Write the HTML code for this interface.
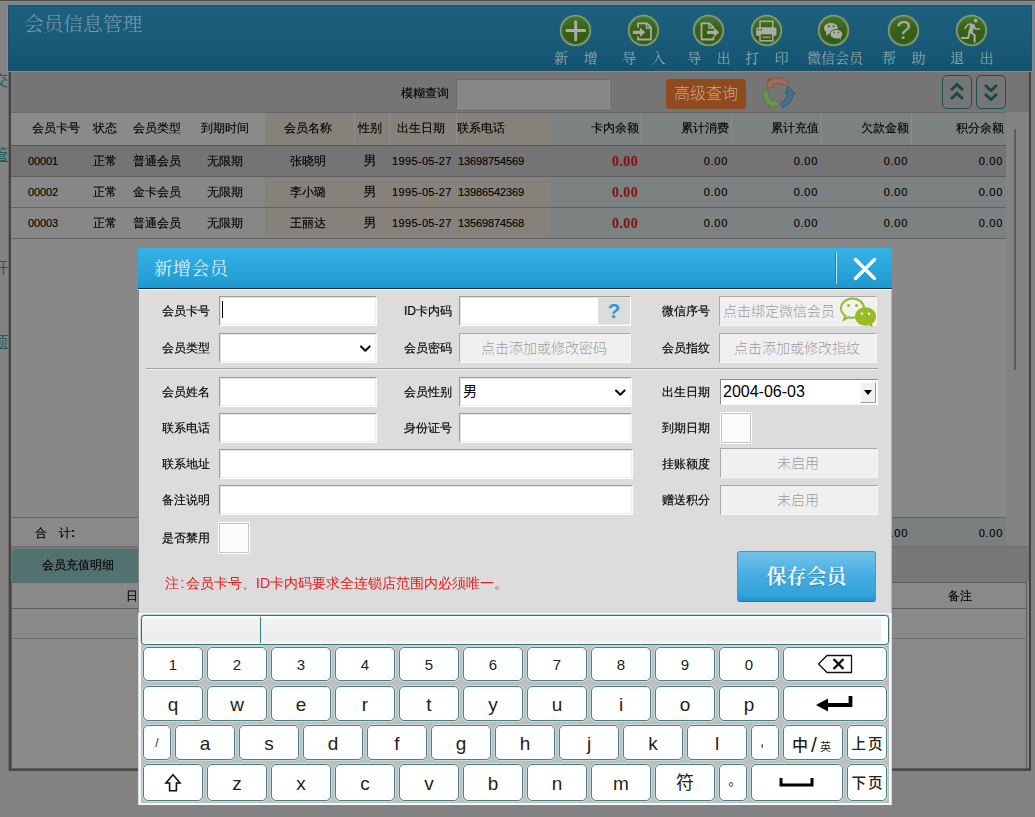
<!DOCTYPE html>
<html lang="zh-CN">
<head>
<meta charset="utf-8">
<title>会员信息管理</title>
<style>
html,body{margin:0;padding:0}
body{width:1035px;height:817px;position:relative;overflow:hidden;background:#838383;
 font-family:"Liberation Sans","Noto Sans CJK SC",sans-serif;font-size:12px;color:#000;line-height:1}
div,span{box-sizing:border-box}
.a{position:absolute}
.song{font-family:"Liberation Serif","Noto Serif CJK SC",serif}
.t{position:absolute;white-space:nowrap;-webkit-text-stroke:.12px #000;font-family:"Liberation Sans","WenQuanYi Zen Hei",sans-serif;font-size:12px;line-height:14px;height:14px}
/* ---------- background app ---------- */
#hdr{z-index:1;left:7px;top:4px;width:1026px;height:68px;background:linear-gradient(#1d607d,#195b78 50%,#125470);border:1px solid #798f99;box-shadow:inset 0 0 0 1px #1f4f66}
#title{z-index:2;left:24px;top:12px;font-size:19.700px;line-height:24px;color:#7d9dab;font-weight:300;white-space:nowrap}
.ico{z-index:2;position:absolute;top:15px;width:31px;height:31px;border-radius:50%;background:linear-gradient(#4a7630,#38641a 40%,#305813);box-shadow:inset 0 0 0 1.300px #8a9c82,inset 0 0 1.500px 2px #5d8045,0 0 1.500px #5d8a6a}
.ico svg{position:absolute;left:0;top:0}
.ilab{z-index:2;position:absolute;top:50px;font-size:14px;line-height:17px;color:#93a8b0;white-space:nowrap;font-weight:400}
#tbar{left:11px;top:71px;width:1018px;height:41px;background:#757575}
.hcell{position:absolute;top:112px;height:33px}
.row{position:absolute;left:11px;width:995px;height:31px}
.line{position:absolute;height:1px;background:#626262}
.t.r{text-align:right}
.num{font-family:"Liberation Sans",sans-serif;font-size:11px;letter-spacing:-0.12px}
.red{font-family:"Liberation Serif",serif;font-weight:bold;font-size:14px;color:#870f0f;-webkit-text-stroke:0;letter-spacing:.35px;margin-right:-1px}
.amt{letter-spacing:.7px}
/* ---------- modal ---------- */
#modal{left:138px;top:248px;width:754px;height:557px;background:#dcdcdc}
#mh{left:0;top:0;width:754px;height:41px;background:linear-gradient(#34b2e4,#2aa6dc 50%,#1e99d0);border-bottom:1px solid #082f4e;box-shadow:0 1px 0 #f4fcff}
.lab{position:absolute;-webkit-text-stroke:.15px #000;font-family:"Liberation Sans","WenQuanYi Zen Hei",sans-serif;font-size:12px;line-height:14px;height:14px;white-space:nowrap;color:#000}
.inp{position:absolute;background:#fff;border:1px solid;border-color:#9c9c9c #fcfcfc #fcfcfc #9c9c9c;box-shadow:inset 1px 1px 0 #e4e4e4,inset -1px -1px 0 #eee}
.dis{position:absolute;background:#f0f0f0;border:1px solid;border-color:#a8a8a8 #f8f8f8 #f8f8f8 #a8a8a8;color:#9d9d9d;font-size:14px;text-align:center;line-height:29px;font-weight:300;text-indent:-2px;white-space:nowrap}
.chk{position:absolute;width:32px;height:32px;background:#fdfbfd;border:1px solid #fff;box-shadow:inset 0 0 0 1px #c4c4c4}
/* keyboard */
#kb{left:1px;top:365px;width:752px;height:192px;background:#bebebe;border:2px solid #f7f7f7}
.k{position:absolute;height:34px;background:#fff;border:1px solid #4a8080;border-radius:5px;text-align:center;font-size:19px;line-height:36px;color:#222;box-shadow:0 0 0 1px #c6dcdc}
.k.n{font-size:15px;line-height:34px}
</style>
</head>
<body>
<!-- BG-START -->
<div class="a" style="left:0;top:0;width:1035px;height:2px;background:#8a8a8a;border-top:1px solid #4b4b4b"></div>
<!-- left sidebar slivers -->
<div class="a" style="left:-7px;top:72px;font-size:15px;line-height:18px;color:#245a5a">交</div>
<div class="a" style="left:-7px;top:146px;font-size:15px;line-height:18px;color:#245a5a;text-decoration:underline">管</div>
<div class="a" style="left:-7px;top:259px;font-size:15px;line-height:18px;color:#245a5a">开</div>
<div class="a" style="left:-7px;top:333px;font-size:15px;line-height:18px;color:#245a5a;text-decoration:underline">项</div>
<!-- window frame -->
<div class="a" style="left:8px;top:71px;width:1023px;height:700px;background:#888;border-left:3px solid #454545;border-right:2px solid #404040;border-bottom:3px solid #4a4a4a"></div>
<div class="a" style="left:8px;top:71px;width:1px;height:700px;background:#6a6a6a"></div>
<div class="a" id="hdr"></div>
<div class="a song" id="title">会员信息管理</div>
<!-- toolbar icons -->
<div class="ico" style="left:560px"><svg width="31" height="31" viewBox="0 0 31 31"><path d="M15.700 6.700v18M6.700 15.600h18" stroke="#a9ada5" stroke-width="3" stroke-linecap="round" fill="none"/></svg></div>
<div class="ilab song" style="left:554px"><span style="letter-spacing:15.5px">新</span>增</div>
<div class="ico" style="left:628px"><svg width="31" height="31" viewBox="0 0 31 31"><path d="M10 12.500V8.300h9l4 4v12.200H10v-3" stroke="#a9ada5" stroke-width="1.800" fill="none" stroke-linejoin="round"/><path d="M18.500 8.500v4.500h4.500" stroke="#a9ada5" stroke-width="1.400" fill="none"/><path d="M4.800 15.700h7.200v-3l5.200 4.600-5.200 4.600v-3H4.800z" fill="#a9ada5"/></svg></div>
<div class="ilab song" style="left:622px"><span style="letter-spacing:15.5px">导</span>入</div>
<div class="ico" style="left:692.5px"><svg width="31" height="31" viewBox="0 0 31 31"><path d="M20.500 21.500v3h-12V8.300h8l4 4v1.500" stroke="#a9ada5" stroke-width="1.800" fill="none" stroke-linejoin="round"/><path d="M16 8.500v4.500h4.500" stroke="#a9ada5" stroke-width="1.400" fill="none"/><path d="M14 15.700h7v-3l5.200 4.600-5.200 4.600v-3h-7z" fill="#a9ada5"/></svg></div>
<div class="ilab song" style="left:687px"><span style="letter-spacing:15.5px">导</span>出</div>
<div class="ico" style="left:751px"><svg width="31" height="31" viewBox="0 0 31 31"><rect x="9" y="6.300" width="12.800" height="7" fill="none" stroke="#a9ada5" stroke-width="1.500"/><rect x="5.200" y="12.500" width="20.300" height="8.300" rx="1" fill="#a9ada5"/><rect x="9" y="18.600" width="12.800" height="7.200" fill="#36601a" stroke="#a9ada5" stroke-width="1.500"/><path d="M11.500 22.200h8" stroke="#a9ada5" stroke-width="1.200"/><rect x="6.700" y="14" width="1.500" height="1.500" fill="#36601a"/><rect x="9.500" y="14" width="1.500" height="1.500" fill="#36601a"/></svg></div>
<div class="ilab song" style="left:745px"><span style="letter-spacing:15.5px">打</span>印</div>
<div class="ico" style="left:818px"><svg width="31" height="31" viewBox="0 0 31 31"><ellipse cx="12.900" cy="13.100" rx="7" ry="5.400" fill="#a9ada5"/><path d="M8.500 16.500l-.7 4.200 4.500-2.700z" fill="#a9ada5"/><ellipse cx="18.400" cy="19.200" rx="6.300" ry="4.800" fill="#a9ada5" stroke="#36601a" stroke-width=".9"/><path d="M20.500 23l2.600 1.600-.6-3z" fill="#a9ada5"/><circle cx="10.800" cy="11.200" r=".95" fill="#36601a"/><circle cx="15.600" cy="11.200" r=".95" fill="#36601a"/><circle cx="16.200" cy="17.500" r=".8" fill="#36601a"/><circle cx="20.500" cy="17.500" r=".8" fill="#36601a"/></svg></div>
<div class="ilab song" style="left:807px">微信会员</div>
<div class="ico" style="left:888px"><div class="a" style="left:0;top:2px;width:31px;text-align:center;font-size:26px;line-height:27px;color:#a9ada5;font-family:'Liberation Sans',sans-serif">?</div></div>
<div class="ilab song" style="left:882px"><span style="letter-spacing:15.5px">帮</span>助</div>
<div class="ico" style="left:956px"><svg width="31" height="31" viewBox="0 0 31 31"><circle cx="19.700" cy="5.600" r="1.900" fill="#a9ada5"/><path d="M16.700 9l-2.500 9" stroke="#a9ada5" stroke-width="4.200" fill="none"/><path d="M15 8.700l-3.200 1-3.300 4" stroke="#a9ada5" stroke-width="1.600" fill="none" stroke-linejoin="round"/><path d="M17.500 10.500l2 3.500h4.800" stroke="#a9ada5" stroke-width="1.600" fill="none" stroke-linejoin="round"/><path d="M13.600 17l-1.400 5.900H5.300" stroke="#a9ada5" stroke-width="2" fill="none" stroke-linejoin="miter"/><path d="M14.800 17.300l3.800 3v7.200" stroke="#a9ada5" stroke-width="2" fill="none" stroke-linejoin="miter"/></svg></div>
<div class="ilab song" style="left:950px"><span style="letter-spacing:15.5px">退</span>出</div>
<!-- toolbar band -->
<div class="a" id="tbar"></div>
<div class="t" style="left:401px;top:86px">模糊查询</div>
<div class="a" style="left:456px;top:79px;width:154px;height:30px;background:#868686;border:1px solid;border-color:#6a6a6a #919191 #919191 #6a6a6a"></div>
<div class="a" style="left:666px;top:79px;width:80px;height:30px;background:#8f4a1e;border-radius:3px;color:#c9a48e;font-size:16px;line-height:29px;text-align:center;font-weight:300">高级查询</div>
<svg class="a" style="left:758px;top:72.5px" width="40" height="40" viewBox="0 0 40 40">
 <path d="M30.75 9.25A15.2 15.2 0 0 0 11.50 7.40L10.94 4.91L8.72 15.90L16.19 13.66L14.52 11.88A9.8 9.8 0 0 1 26.43 12.60Z" fill="#a06d57" stroke="#80503c" stroke-width=".8" stroke-linejoin="round"/>
 <path d="M5.19 16.58A15.2 15.2 0 0 0 12.86 33.42L10.94 35.09L21.67 31.88L16.19 26.34L15.40 28.65A9.8 9.8 0 0 1 10.32 18.47Z" fill="#6a9451" stroke="#52743f" stroke-width=".8" stroke-linejoin="round"/>
 <path d="M24.19 34.61A15.2 15.2 0 0 0 35.20 20.27L37.56 21.23L29.83 13.12L27.38 20.52L29.80 20.17A9.8 9.8 0 0 1 23.35 29.21Z" fill="#407198" stroke="#2d5472" stroke-width=".8" stroke-linejoin="round"/>
</svg>
<div class="a" style="left:942px;top:75px;width:30px;height:34px;border:1px solid #1b4e4e;border-radius:5px"><svg width="28" height="32" viewBox="0 0 28 32"><path d="M8 14l6-5.500 6 5.500M8 23l6-5.500 6 5.500" stroke="#154846" stroke-width="2.800" fill="none"/></svg></div>
<div class="a" style="left:976px;top:75px;width:30px;height:34px;border:1px solid #1b4e4e;border-radius:5px"><svg width="28" height="32" viewBox="0 0 28 32"><path d="M8 9l6 5.500 6-5.500M8 18l6 5.500 6-5.500" stroke="#154846" stroke-width="2.800" fill="none"/></svg></div>
<!-- table header -->
<div class="a" style="left:11px;top:112px;width:995px;height:34px;background:#8a8a8a;border-top:1px solid #686868"></div>
<div class="a" style="left:265px;top:113px;width:285px;height:125px;background:#86817a"></div>
<div class="a" style="left:550px;top:113px;width:456px;height:125px;background:#7c8281"></div>
<div class="a" style="left:550px;top:113px;width:2px;height:32px;background:#86817a"></div>
<div class="a" style="left:11px;top:177px;width:254px;height:61px;background:#878787"></div>
<div class="a" style="left:11px;top:145px;width:995px;height:32px;background:#747474;border-top:1px solid #555"></div>
<div class="line" style="left:11px;top:176px;width:995px;background:#606060"></div>
<div class="line" style="left:11px;top:207px;width:995px;background:#626262"></div>
<div class="line" style="left:11px;top:238px;width:995px;background:#626262"></div>
<!-- header dividers -->
<div class="a" style="left:354px;top:113px;width:1px;height:32px;background:#938c86"></div>
<div class="a" style="left:389px;top:113px;width:1px;height:32px;background:#938c86"></div>
<div class="a" style="left:456px;top:113px;width:1px;height:32px;background:#938c86"></div>
<div class="a" style="left:641px;top:113px;width:1px;height:32px;background:#869092"></div>
<div class="a" style="left:731px;top:113px;width:1px;height:32px;background:#869092"></div>
<div class="a" style="left:821px;top:113px;width:1px;height:32px;background:#869092"></div>
<div class="a" style="left:911px;top:113px;width:1px;height:32px;background:#869092"></div>
<!-- header text -->
<div class="t" style="left:32px;top:121px">会员卡号</div>
<div class="t" style="left:93px;top:121px">状态</div>
<div class="t" style="left:133px;top:121px">会员类型</div>
<div class="t" style="left:201px;top:121px">到期时间</div>
<div class="t" style="left:284px;top:121px">会员名称</div>
<div class="t" style="left:358px;top:121px">性别</div>
<div class="t" style="left:397px;top:121px">出生日期</div>
<div class="t" style="left:457px;top:121px">联系电话</div>
<div class="t r" style="right:396px;top:121px">卡内余额</div>
<div class="t r" style="right:306px;top:121px">累计消费</div>
<div class="t r" style="right:216px;top:121px">累计充值</div>
<div class="t r" style="right:126px;top:121px">欠款金额</div>
<div class="t r" style="right:31px;top:121px">积分余额</div>
<div class="t num" style="left:28px;top:154px">00001</div>
<div class="t" style="left:93px;top:154px">正常</div>
<div class="t" style="left:133px;top:154px">普通会员</div>
<div class="t" style="left:207px;top:154px">无限期</div>
<div class="t" style="left:290px;top:154px">张晓明</div>
<div class="t" style="left:363.5px;top:154px;font-size:13px">男</div>
<div class="t num" style="left:392px;top:154px;letter-spacing:.35px">1995-05-27</div>
<div class="t num" style="left:458px;top:154px">13698754569</div>
<div class="t red" style="right:398px;top:154.5px">0.00</div>
<div class="t num amt" style="right:307px;top:154px">0.00</div>
<div class="t num amt" style="right:217px;top:154px">0.00</div>
<div class="t num amt" style="right:127px;top:154px">0.00</div>
<div class="t num amt" style="right:32px;top:154px">0.00</div>
<div class="t num" style="left:28px;top:185px">00002</div>
<div class="t" style="left:93px;top:185px">正常</div>
<div class="t" style="left:133px;top:185px">金卡会员</div>
<div class="t" style="left:207px;top:185px">无限期</div>
<div class="t" style="left:290px;top:185px">李小璐</div>
<div class="t" style="left:363.5px;top:185px;font-size:13px">男</div>
<div class="t num" style="left:392px;top:185px;letter-spacing:.35px">1995-05-27</div>
<div class="t num" style="left:458px;top:185px">13986542369</div>
<div class="t red" style="right:398px;top:185.5px">0.00</div>
<div class="t num amt" style="right:307px;top:185px">0.00</div>
<div class="t num amt" style="right:217px;top:185px">0.00</div>
<div class="t num amt" style="right:127px;top:185px">0.00</div>
<div class="t num amt" style="right:32px;top:185px">0.00</div>
<div class="t num" style="left:28px;top:216px">00003</div>
<div class="t" style="left:93px;top:216px">正常</div>
<div class="t" style="left:133px;top:216px">普通会员</div>
<div class="t" style="left:207px;top:216px">无限期</div>
<div class="t" style="left:290px;top:216px">王丽达</div>
<div class="t" style="left:363.5px;top:216px;font-size:13px">男</div>
<div class="t num" style="left:392px;top:216px;letter-spacing:.35px">1995-05-27</div>
<div class="t num" style="left:458px;top:216px">13569874568</div>
<div class="t red" style="right:398px;top:216.5px">0.00</div>
<div class="t num amt" style="right:307px;top:216px">0.00</div>
<div class="t num amt" style="right:217px;top:216px">0.00</div>
<div class="t num amt" style="right:127px;top:216px">0.00</div>
<div class="t num amt" style="right:32px;top:216px">0.00</div>
<!-- scrollbar line -->
<div class="a" style="left:1006px;top:112px;width:23px;height:435px;background:#838383"></div>
<div class="a" style="left:1014px;top:129px;width:2px;height:241px;background:#5c5c5c"></div>
<!-- total row -->
<div class="a" style="left:11px;top:517px;width:995px;height:30px;background:#8a8a8a;border-top:1px solid #646464;border-bottom:1px solid #707070"></div>
<div class="a" style="left:550px;top:518px;width:456px;height:28px;background:#7a807f"></div>
<div class="t" style="left:35px;top:526px"><span style="letter-spacing:12px">合</span>计<b>:</b></div>
<div class="t num amt" style="right:127px;top:526px">0.00</div>
<div class="t num amt" style="right:32px;top:526px">0.00</div>
<div class="line" style="left:11px;top:546px;width:1018px;background:#6c6c6c"></div>
<!-- tab strip -->
<div class="a" style="left:11px;top:547px;width:1018px;height:35px;background:#777"></div>
<div class="a" style="left:12px;top:549px;width:140px;height:34px;background:#53716f;border-radius:4px 0 0 0;z-index:2"></div>
<div class="t" style="left:42px;top:558px;z-index:3">会员充值明细</div>
<!-- detail grid -->
<div class="a" style="left:11px;top:582px;width:1016px;height:187px;background:#898989;border:1px solid #5c5c5c"></div>
<div class="line" style="left:11px;top:608px;width:1016px;background:#5c5c5c"></div>
<div class="line" style="left:11px;top:638px;width:1016px;background:#6c6c6c"></div>
<div class="t" style="left:126px;top:589px">日期</div>
<div class="t" style="left:948px;top:589px">备注</div>
<!-- BG-END -->
<!-- MODAL-START -->
<div class="a" id="modal" style="z-index:5">
 <div class="a" style="left:0;top:41px;width:754px;height:324px;border-left:1px solid #858585;border-right:1px solid #b4b4b4"></div>
 <div class="a" id="mh"></div>
 <div class="a song" style="left:16px;top:8px;font-size:18.5px;line-height:22px;margin-top:1.5px;color:#d9f1fb;white-space:nowrap">新增会员</div>
 <div class="a" style="left:697px;top:4px;width:2px;height:32px;background:#1a86b8;border-right:1px solid #bfe6f6"></div>
 <svg class="a" style="left:714px;top:8px" width="26" height="26" viewBox="0 0 26 26"><path d="M3.500 3.500l19 19M22.500 3.500l-19 19" stroke="#fff" stroke-width="3.400" stroke-linecap="round"/></svg>
 <div class="lab" style="left:24px;top:56px">会员卡号</div>
 <div class="lab" style="left:24px;top:93px">会员类型</div>
 <div class="lab" style="left:24px;top:137px">会员姓名</div>
 <div class="lab" style="left:24px;top:173px">联系电话</div>
 <div class="lab" style="left:24px;top:209px">联系地址</div>
 <div class="lab" style="left:24px;top:245px">备注说明</div>
 <div class="lab" style="left:24px;top:283px">是否禁用</div>
 <div class="lab" style="left:266px;top:56px">ID卡内码</div>
 <div class="lab" style="left:266px;top:93px">会员密码</div>
 <div class="lab" style="left:266px;top:137px">会员性别</div>
 <div class="lab" style="left:266px;top:173px">身份证号</div>
 <div class="lab" style="left:524px;top:56px">微信序号</div>
 <div class="lab" style="left:524px;top:93px">会员指纹</div>
 <div class="lab" style="left:524px;top:137px">出生日期</div>
 <div class="lab" style="left:524px;top:173px">到期日期</div>
 <div class="lab" style="left:524px;top:209px">挂账额度</div>
 <div class="lab" style="left:524px;top:245px">赠送积分</div>
 <div class="inp" style="left:81px;top:48px;width:158px;height:30px"></div>
 <div class="inp" style="left:81px;top:85px;width:158px;height:30px"></div>
 <div class="inp" style="left:81px;top:129px;width:158px;height:30px"></div>
 <div class="inp" style="left:81px;top:165px;width:158px;height:30px"></div>
 <div class="inp" style="left:81px;top:201px;width:414px;height:30px"></div>
 <div class="inp" style="left:81px;top:237px;width:414px;height:30px"></div>
 <div class="a" style="left:84px;top:53px;width:1px;height:17px;background:#000"></div>
 <svg class="a" style="left:220px;top:95px" width="14" height="10" viewBox="0 0 14 10"><path d="M3 3.400l4.300 4.300 4.300-4.300" stroke="#111" stroke-width="2.100" fill="none" stroke-linecap="round" stroke-linejoin="round"/></svg>
 <div class="inp" style="left:321px;top:48px;width:172px;height:30px"></div>
 <div class="a" style="left:460px;top:50px;width:32px;height:26px;background:#dcdcdc;color:#2f9bd1;font-weight:bold;font-size:21px;line-height:26px;text-align:center">?</div>
 <div class="dis" style="left:321px;top:85px;width:172px;height:30px">点击添加或修改密码</div>
 <div class="inp" style="left:321px;top:129px;width:173px;height:30px"><span style="position:absolute;left:3px;top:4px;font-size:14px;line-height:18px">男</span></div>
 <svg class="a" style="left:475px;top:139px" width="14" height="10" viewBox="0 0 14 10"><path d="M3 3.400l4.300 4.300 4.300-4.300" stroke="#111" stroke-width="2.100" fill="none" stroke-linecap="round" stroke-linejoin="round"/></svg>
 <div class="inp" style="left:321px;top:165px;width:173px;height:30px"></div>
 <div class="dis" style="left:581px;top:48px;width:158px;height:30px;text-align:left"><span style="position:absolute;left:5px;top:0">点击绑定微信会员</span></div>
 <div class="dis" style="left:581px;top:85px;width:158px;height:30px">点击添加或修改指纹</div>
 <svg class="a" style="left:700px;top:47.60000000000002px" width="40" height="34" viewBox="0 0 40 34"><path d="M14.500 2.500c-6.300 0-11.500 4.300-11.500 9.700 0 3 1.700 5.700 4.300 7.500l-1.300 4 4.600-2.500c1.200.4 2.500.6 3.900.6 6.300 0 11.500-4.300 11.500-9.600S20.800 2.500 14.500 2.500z" fill="#f1f1f1" stroke="#97bc24" stroke-width="2"/><circle cx="10.500" cy="9.500" r="1.500" fill="#97bc24"/><circle cx="18.500" cy="9.500" r="1.500" fill="#97bc24"/><path d="M27.500 11.300c-5.800 0-10.500 4.100-10.500 9.200s4.700 9.200 10.500 9.200c1.200 0 2.400-.2 3.500-.5l4 2.300-1.100-3.600c2.500-1.700 4.100-4.400 4.100-7.400 0-5.100-4.700-9.200-10.500-9.200z" fill="#97bc24"/><circle cx="24" cy="17.800" r="1.300" fill="#f1f1f1"/><circle cx="31" cy="17.800" r="1.300" fill="#f1f1f1"/></svg>
 <div class="a" style="left:8px;top:120px;width:732px;height:2px;background:#a0a0a0;border-bottom:1px solid #eee"></div>
 <div class="a" style="left:582px;top:131px;width:158px;height:26px;background:#fff;border:1px solid;border-color:#8c8c8c #f6f6f6 #f6f6f6 #8c8c8c"><span style="position:absolute;left:2px;top:2px;font-size:16px;line-height:19px;font-family:'Liberation Sans',sans-serif;color:#000">2004-06-03</span><div class="a" style="right:1px;top:2px;width:16px;height:21px;background:#f0f0f0;border:1px solid;border-color:#fff #9a9a9a #9a9a9a #fff"><div class="a" style="left:3px;top:7px;width:0;height:0;border:4px solid transparent;border-top:5px solid #000;border-bottom:0"></div></div></div>
 <div class="chk" style="left:582px;top:164px"></div>
 <div class="chk" style="left:80px;top:274px"></div>
 <div class="dis" style="left:582px;top:200px;width:158px;height:30px">未启用</div>
 <div class="dis" style="left:582px;top:237px;width:158px;height:30px">未启用</div>
 <div class="a" style="left:27px;top:327px;font-family:'Liberation Sans','WenQuanYi Zen Hei',sans-serif;font-size:14px;line-height:16px;color:#e01c1c;white-space:nowrap">注<span style="display:inline-block;width:7px;text-align:center">:</span>会员卡号、ID卡内码要求全连锁店范围内必须唯一。</div>
 <div class="a song" style="left:599px;top:303px;width:139px;height:51px;border-radius:3px;background:linear-gradient(#72c3ea,#49aee1 45%,#2fa2da 90%,#2690c6);border:1px solid #3b9dd0;border-bottom-color:#1f7fb2;color:#eaf7fd;font-weight:bold;font-size:20px;line-height:50px;text-align:center;text-shadow:0 1px 1px #2b7fae">保存会员</div>
 <div class="a" id="kb">
  <div class="a" style="left:0px;top:0px;width:748px;height:30px;border:1px solid #3a7272;border-radius:3.500px;box-shadow:0 0 0 1px #bcdada;background:linear-gradient(90deg,rgba(255,255,255,0) 739px,#fff 740px),linear-gradient(#fff,#f3f3f3 12%,#ececec 85%,#fafafa)"></div>
  <div class="a" style="left:119px;top:2px;width:1px;height:26px;background:#2f7f7f"></div>
  <div class="k n" style="left:2px;top:32px;width:60px;height:34px">1</div>
  <div class="k n" style="left:66px;top:32px;width:60px;height:34px">2</div>
  <div class="k n" style="left:130px;top:32px;width:60px;height:34px">3</div>
  <div class="k n" style="left:194px;top:32px;width:60px;height:34px">4</div>
  <div class="k n" style="left:258px;top:32px;width:60px;height:34px">5</div>
  <div class="k n" style="left:322px;top:32px;width:60px;height:34px">6</div>
  <div class="k n" style="left:386px;top:32px;width:60px;height:34px">7</div>
  <div class="k n" style="left:450px;top:32px;width:60px;height:34px">8</div>
  <div class="k n" style="left:514px;top:32px;width:60px;height:34px">9</div>
  <div class="k n" style="left:578px;top:32px;width:60px;height:34px">0</div>
  <div class="k" style="left:642px;top:32px;width:104px;height:34px"><svg width="36" height="20" viewBox="0 0 36 20" style="position:absolute;left:32.500px;top:6px"><path d="M10 1.500h24.500v17H10L1.500 10z" fill="none" stroke="#111" stroke-width="1.300"/><path d="M16.500 5l10 10M26.500 5l-10 10" stroke="#111" stroke-width="2.400"/></svg></div>
  <div class="k" style="left:2px;top:71px;width:60px;height:35px">q</div>
  <div class="k" style="left:66px;top:71px;width:60px;height:35px">w</div>
  <div class="k" style="left:130px;top:71px;width:60px;height:35px">e</div>
  <div class="k" style="left:194px;top:71px;width:60px;height:35px">r</div>
  <div class="k" style="left:258px;top:71px;width:60px;height:35px">t</div>
  <div class="k" style="left:322px;top:71px;width:60px;height:35px">y</div>
  <div class="k" style="left:386px;top:71px;width:60px;height:35px">u</div>
  <div class="k" style="left:450px;top:71px;width:60px;height:35px">i</div>
  <div class="k" style="left:514px;top:71px;width:60px;height:35px">o</div>
  <div class="k" style="left:578px;top:71px;width:60px;height:35px">p</div>
  <div class="k" style="left:642px;top:71px;width:104px;height:35px"><svg width="40" height="20" viewBox="0 0 40 20" style="position:absolute;left:31px;top:6.500px"><path d="M35.500 2v9H12" fill="none" stroke="#000" stroke-width="3.800"/><path d="M1 11l12-6.500v13z" fill="#000"/></svg></div>
  <div class="k" style="left:2px;top:110px;width:28px;height:35px"><span style="font-size:12px;position:relative;top:-3px">/</span></div>
  <div class="k" style="left:34px;top:110px;width:60px;height:35px">a</div>
  <div class="k" style="left:98px;top:110px;width:60px;height:35px">s</div>
  <div class="k" style="left:162px;top:110px;width:60px;height:35px">d</div>
  <div class="k" style="left:226px;top:110px;width:60px;height:35px">f</div>
  <div class="k" style="left:290px;top:110px;width:60px;height:35px">g</div>
  <div class="k" style="left:354px;top:110px;width:60px;height:35px">h</div>
  <div class="k" style="left:418px;top:110px;width:60px;height:35px">j</div>
  <div class="k" style="left:482px;top:110px;width:60px;height:35px">k</div>
  <div class="k" style="left:546px;top:110px;width:60px;height:35px">l</div>
  <div class="k" style="left:610px;top:110px;width:28px;height:35px"><span style="font-size:15px;position:relative;top:-4.500px;left:-3px">,</span></div>
  <div class="k" style="left:642px;top:110px;width:60px;height:35px"><span style="font-size:16px;font-weight:500;margin-left:-3px">中</span><span style="font-size:21px;margin:0 3px 0 3px;position:relative;top:1px">/</span><span style="font-size:11px">英</span></div>
  <div class="k" style="left:706px;top:110px;width:40px;height:35px;line-height:33px"><span style="font-size:14.500px;font-weight:500;letter-spacing:2px;margin-right:-2px">上页</span></div>
  <div class="k" style="left:2px;top:149px;width:60px;height:37px"><svg width="20" height="20" viewBox="0 0 20 20" style="position:absolute;left:19px;top:8px"><path d="M10 1.800l7 8.200h-3.600v7.700H6.600V10H3z" fill="#fff" stroke="#111" stroke-width="1.600" stroke-linejoin="miter"/></svg></div>
  <div class="k" style="left:66px;top:149px;width:60px;height:37px;line-height:38px">z</div>
  <div class="k" style="left:130px;top:149px;width:60px;height:37px;line-height:38px">x</div>
  <div class="k" style="left:194px;top:149px;width:60px;height:37px;line-height:38px">c</div>
  <div class="k" style="left:258px;top:149px;width:60px;height:37px;line-height:38px">v</div>
  <div class="k" style="left:322px;top:149px;width:60px;height:37px;line-height:38px">b</div>
  <div class="k" style="left:386px;top:149px;width:60px;height:37px;line-height:38px">n</div>
  <div class="k" style="left:450px;top:149px;width:60px;height:37px;line-height:38px">m</div>
  <div class="k" style="left:514px;top:149px;width:60px;height:37px;line-height:35px"><span style="font-size:18px">符</span></div>
  <div class="k" style="left:578px;top:149px;width:28px;height:37px"><span style="font-size:13px;position:relative;top:-4px;left:2px">。</span></div>
  <div class="k" style="left:610px;top:149px;width:92px;height:37px"><svg width="40" height="12" viewBox="0 0 40 12" style="position:absolute;left:26px;top:12px"><path d="M3 1v7h31V1" fill="none" stroke="#000" stroke-width="3"/></svg></div>
  <div class="k" style="left:706px;top:149px;width:40px;height:37px;line-height:33px"><span style="font-size:14.500px;font-weight:500;letter-spacing:2px;margin-right:-2px">下页</span></div>
 </div>
</div>
<!-- MODAL-END -->
</body>
</html>
